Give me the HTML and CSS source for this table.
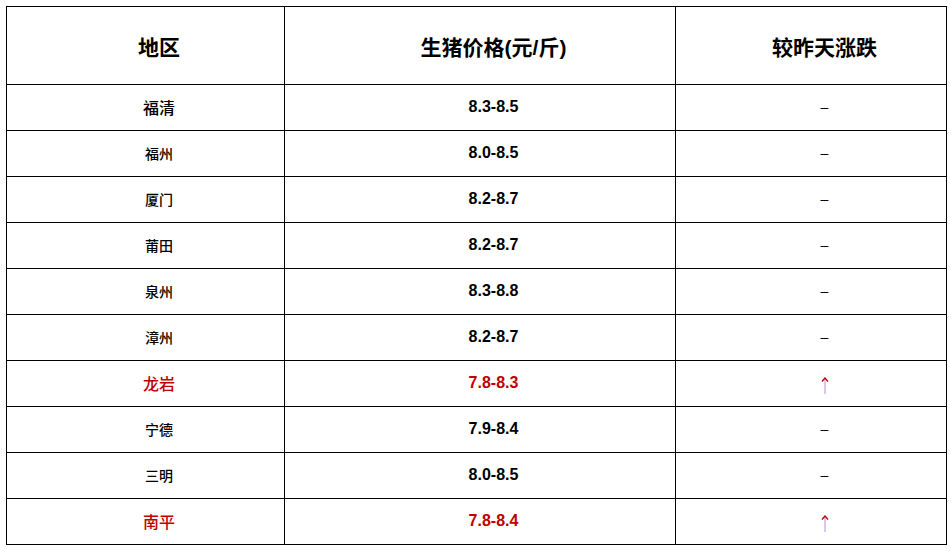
FILE: index.html
```html
<!DOCTYPE html>
<html lang="zh-CN">
<head>
<meta charset="utf-8">
<link rel="stylesheet" href="styles.css">
</head>
<body>
<table class="price-table">
  <colgroup>
    <col class="c1"><col class="c2"><col class="c3">
  </colgroup>
  <thead>
    <tr><th>地区</th><th>生猪价格(元/斤)</th><th>较昨天涨跌</th></tr>
  </thead>
  <tbody>
    <tr><td class="big">福清</td><td class="num">8.3-8.5</td><td class="chg">–</td></tr>
    <tr><td>福州</td><td class="num">8.0-8.5</td><td class="chg">–</td></tr>
    <tr><td>厦门</td><td class="num">8.2-8.7</td><td class="chg">–</td></tr>
    <tr><td>莆田</td><td class="num">8.2-8.7</td><td class="chg">–</td></tr>
    <tr><td>泉州</td><td class="num">8.3-8.8</td><td class="chg">–</td></tr>
    <tr><td>漳州</td><td class="num">8.2-8.7</td><td class="chg">–</td></tr>
    <tr class="up"><td class="big">龙岩</td><td class="num">7.8-8.3</td><td class="chg"><svg class="arrow" width="8" height="18" viewBox="0 0 8 18" aria-label="↑"><path d="M4 1.5V18" stroke="#c8a0d8" stroke-width="1.2" fill="none"/><path d="M1 5.5L4 2L7 5.5" stroke="#c00000" stroke-width="1.3" fill="none"/></svg></td></tr>
    <tr><td>宁德</td><td class="num">7.9-8.4</td><td class="chg">–</td></tr>
    <tr><td>三明</td><td class="num">8.0-8.5</td><td class="chg">–</td></tr>
    <tr class="up"><td class="big">南平</td><td class="num">7.8-8.4</td><td class="chg"><svg class="arrow" width="8" height="18" viewBox="0 0 8 18" aria-label="↑"><path d="M4 1.5V18" stroke="#c8a0d8" stroke-width="1.2" fill="none"/><path d="M1 5.5L4 2L7 5.5" stroke="#c00000" stroke-width="1.3" fill="none"/></svg></td></tr>
  </tbody>
</table>
</body>
</html>
```
FILE: styles.css
```css
html, body {
  margin: 0;
  padding: 0;
  background: #fff;
}
body {
  padding: 6px;
  font-family: "Liberation Sans", "Noto Sans CJK SC", sans-serif;
  color: #000;
}
.price-table {
  border-collapse: collapse;
  width: 940px;
  table-layout: fixed;
}
.c1 { width: 278px; }
.c2 { width: 391px; }
.c3 { width: 271px; }
.price-table th,
.price-table td {
  border: 1px solid #000;
  text-align: center;
  vertical-align: middle;
  padding: 0 0 0 27px;
}
.price-table th {
  height: 77px;
  font-size: 21px;
  font-weight: bold;
}
.price-table td {
  height: 43px;
  padding-bottom: 2px;
  font-size: 14px;
  font-weight: 500;
}
.price-table td.big {
  font-size: 16px;
}
.price-table td.num {
  font-weight: bold;
  font-size: 16px;
}
.price-table td.chg {
  font-size: 14px;
  font-weight: normal;
  line-height: 18px;
}
.arrow {
  display: inline-block;
  vertical-align: middle;
  margin-top: 4px;
}
.up td {
  color: #c00000;
}
```
